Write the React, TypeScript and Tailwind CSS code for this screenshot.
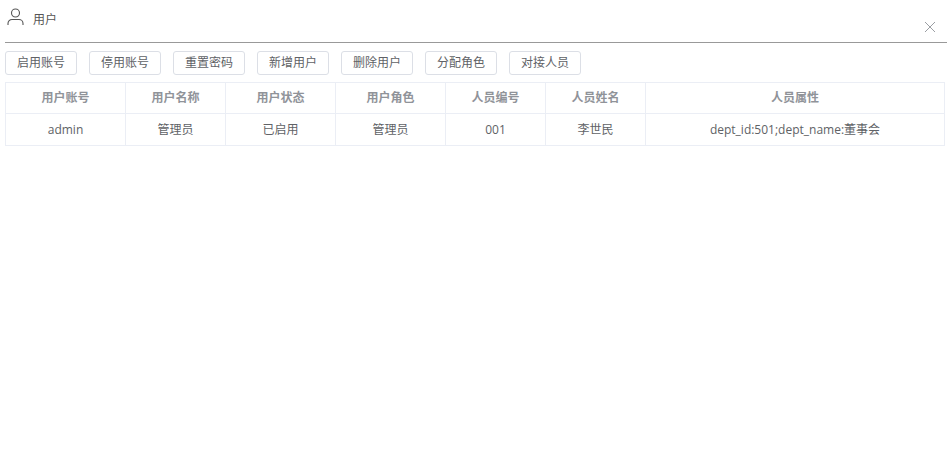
import React from 'react';

const actions = ['启用账号', '停用账号', '重置密码', '新增用户', '删除用户', '分配角色', '对接人员'];

const columns = [
    { label: '用户账号', width: 'w-[120px]', value: 'admin' },
    { label: '用户名称', width: 'w-[100px]', value: '管理员' },
    { label: '用户状态', width: 'w-[110px]', value: '已启用' },
    { label: '用户角色', width: 'w-[110px]', value: '管理员' },
    { label: '人员编号', width: 'w-[100px]', value: '001' },
    { label: '人员姓名', width: 'w-[100px]', value: '李世民' },
    { label: '人员属性', width: '', value: 'dept_id:501;dept_name:董事会' },
];

export default function App() {
    return (
        <div className="w-[952px] h-[469px] bg-white px-[5px] text-[12px] text-[#606266] font-['Open_Sans','Noto_Sans_CJK_SC',sans-serif]">
            <div className="h-[43px] border-b border-[#999] flex items-start relative">
                <svg className="mt-[8px] ml-[2px] w-[17px] h-[17px]" viewBox="0 0 17 17" fill="none" stroke="#555" strokeWidth="1.1">
                    <circle cx="8.5" cy="5" r="4" />
                    <path d="M1 17v-1.5c0-2.2 1.8-4 4-4h7c2.2 0 4 1.8 4 4V17" />
                </svg>
                <span className="ml-[9px] mt-[11px] leading-[17px] text-[#555]">用户</span>
                <svg className="absolute right-[12px] top-[22px] w-[10px] h-[10px]" viewBox="0 0 10 10" stroke="#909399" strokeWidth="0.9">
                    <path d="M0 0l10 10M10 0L0 10" />
                </svg>
            </div>
            <div className="flex gap-[12px] mt-[8px]">
                {actions.map(a => (
                    <button key={a} className="w-[72px] h-[24px] border border-[#dcdfe6] rounded-[3px] bg-white leading-none text-[#606266]">{a}</button>
                ))}
            </div>
            <table className="mt-[7px] w-[940px] table-fixed border-collapse">
                <thead>
                    <tr className="h-[31px]">
                        {columns.map(c => (
                            <th key={c.label} className={`${c.width} border border-[#ebeef5] font-bold text-[#909399] text-center p-0`}>{c.label}</th>
                        ))}
                    </tr>
                </thead>
                <tbody>
                    <tr className="h-[32px]">
                        {columns.map(c => (
                            <td key={c.label} className="border border-[#ebeef5] text-center p-0">{c.value}</td>
                        ))}
                    </tr>
                </tbody>
            </table>
        </div>
    );
}
